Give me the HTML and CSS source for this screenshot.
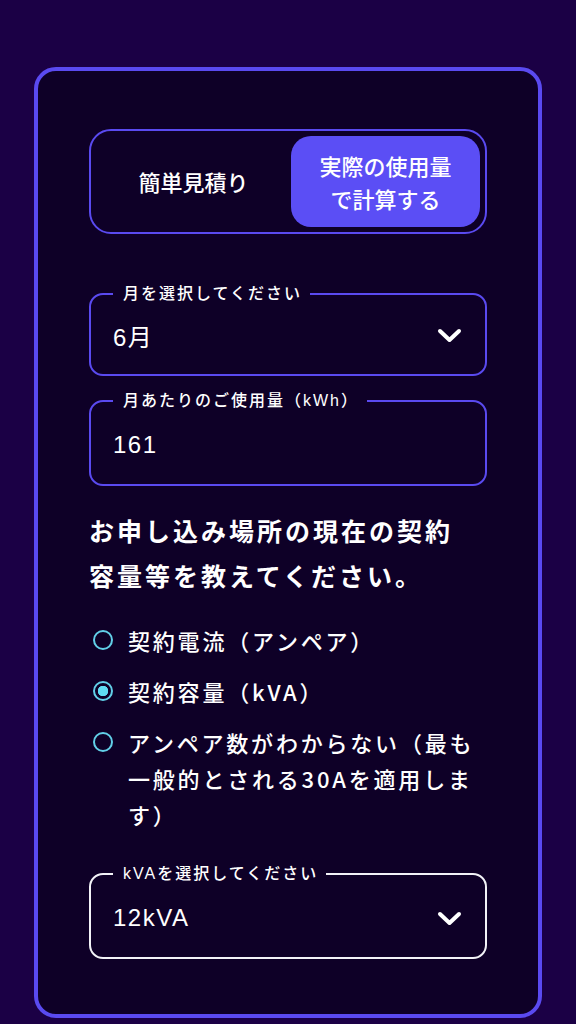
FILE: index.html
```html
<!DOCTYPE html>
<html lang="ja">
<head>
<meta charset="utf-8">
<title>見積り</title>
<link rel="stylesheet" href="styles.css">
</head>
<body>
<main class="card">
  <div class="toggle">
    <button class="toggle__btn" type="button">簡単見積り</button>
    <button class="toggle__btn toggle__btn--active" type="button">実際の使用量<br>で計算する</button>
  </div>

  <fieldset class="field field--short">
    <legend class="field__label">月を選択してください</legend>
    <div class="field__row">
      <span class="field__value">6月</span>
      <svg class="chevron" width="25" height="15" viewBox="0 0 25 15"><path d="M3 3 L12.5 12 L22 3" fill="none" stroke="#fff" stroke-width="4" stroke-linecap="round" stroke-linejoin="round"/></svg>
    </div>
  </fieldset>

  <fieldset class="field field--gap">
    <legend class="field__label">月あたりのご使用量（kWh）</legend>
    <div class="field__row">
      <span class="field__value">161</span>
    </div>
  </fieldset>

  <h2 class="heading">お申し込み場所の現在の契約容量等を教えてください。</h2>

  <div class="radios">
    <label class="radio"><input type="radio" name="cap" class="radio__input"><span class="radio__text">契約電流（アンペア）</span></label>
    <label class="radio"><input type="radio" name="cap" class="radio__input" checked><span class="radio__text">契約容量（kVA）</span></label>
    <label class="radio"><input type="radio" name="cap" class="radio__input"><span class="radio__text">アンペア数がわからない（最も一般的とされる30Aを適用します）</span></label>
  </div>

  <fieldset class="field field--white">
    <legend class="field__label">kVAを選択してください</legend>
    <div class="field__row">
      <span class="field__value">12kVA</span>
      <svg class="chevron" width="25" height="15" viewBox="0 0 25 15"><path d="M3 3 L12.5 12 L22 3" fill="none" stroke="#fff" stroke-width="4" stroke-linecap="round" stroke-linejoin="round"/></svg>
    </div>
  </fieldset>
</main>
</body>
</html>
```

FILE: styles.css
```css
* { box-sizing: border-box; }

html, body {
  margin: 0;
  background: #1b0045;
}

body {
  padding: 67px 34px 0;
  font-family: "Liberation Sans", "Noto Sans CJK JP", sans-serif;
  color: #ffffff;
}

.card {
  display: flex;
  flex-direction: column;
  background: #0e0027;
  border: 4px solid #5a4af0;
  border-radius: 22px;
  padding: 58px 51px 55px;
}

.toggle {
  display: grid;
  grid-template-columns: 1fr 189px;
  padding: 5px;
  border: 2px solid #5a4af0;
  border-radius: 22px;
}

.toggle__btn {
  font-family: "Noto Sans CJK JP", sans-serif;
  font-size: 22px;
  font-weight: 500;
  line-height: 33px;
  color: #ffffff;
  background: transparent;
  border: 0;
  border-radius: 20px;
  padding: 12.5px 0;
  text-align: center;
}

.toggle__btn--active {
  background: #5b4ef5;
}

.field {
  margin: 51px 0 0;
  padding: 0 22px;
  border: 2px solid #5a4af0;
  border-radius: 14px;
  min-width: 0;
}

.field--gap {
  margin-top: 16px;
}

.field--white {
  margin-top: 33px;
  border-color: #f2f2f7;
}

.field__label {
  padding: 0 8px 0 10px;
  font-size: 16px;
  line-height: 18px;
  font-weight: 500;
  letter-spacing: 2px;
  color: #ffffff;
}

.field__row {
  display: flex;
  align-items: center;
  justify-content: space-between;
  height: 74px;
  padding-bottom: 4px;
}

.field--short .field__row {
  height: 71px;
  padding-bottom: 7px;
}

.field__value {
  font-size: 24px;
  font-weight: 400;
  letter-spacing: 1.5px;
}

.chevron {
  display: block;
  margin-right: 1px;
}

.heading {
  margin: 21.5px 0 0;
  padding-right: 10px;
  font-family: "Noto Sans CJK JP", sans-serif;
  font-size: 25px;
  line-height: 45px;
  font-weight: 700;
  letter-spacing: 3px;
}

.radios {
  display: flex;
  flex-direction: column;
  gap: 15px;
  margin-top: 24.5px;
}

.radio {
  display: flex;
  align-items: flex-start;
  gap: 15px;
  padding-left: 4px;
}

.radio__input {
  appearance: none;
  -webkit-appearance: none;
  flex: none;
  width: 20px;
  height: 20px;
  margin: 8px 0 0;
  border: 2px solid #62cfe8;
  border-radius: 50%;
  background: transparent;
}

.radio__input:checked {
  background: radial-gradient(circle, #5fdcf3 0 5px, transparent 5.5px);
}

.radio__text {
  font-family: "Noto Sans CJK JP", sans-serif;
  font-size: 22px;
  line-height: 36px;
  font-weight: 500;
  letter-spacing: 2.8px;
}
```
